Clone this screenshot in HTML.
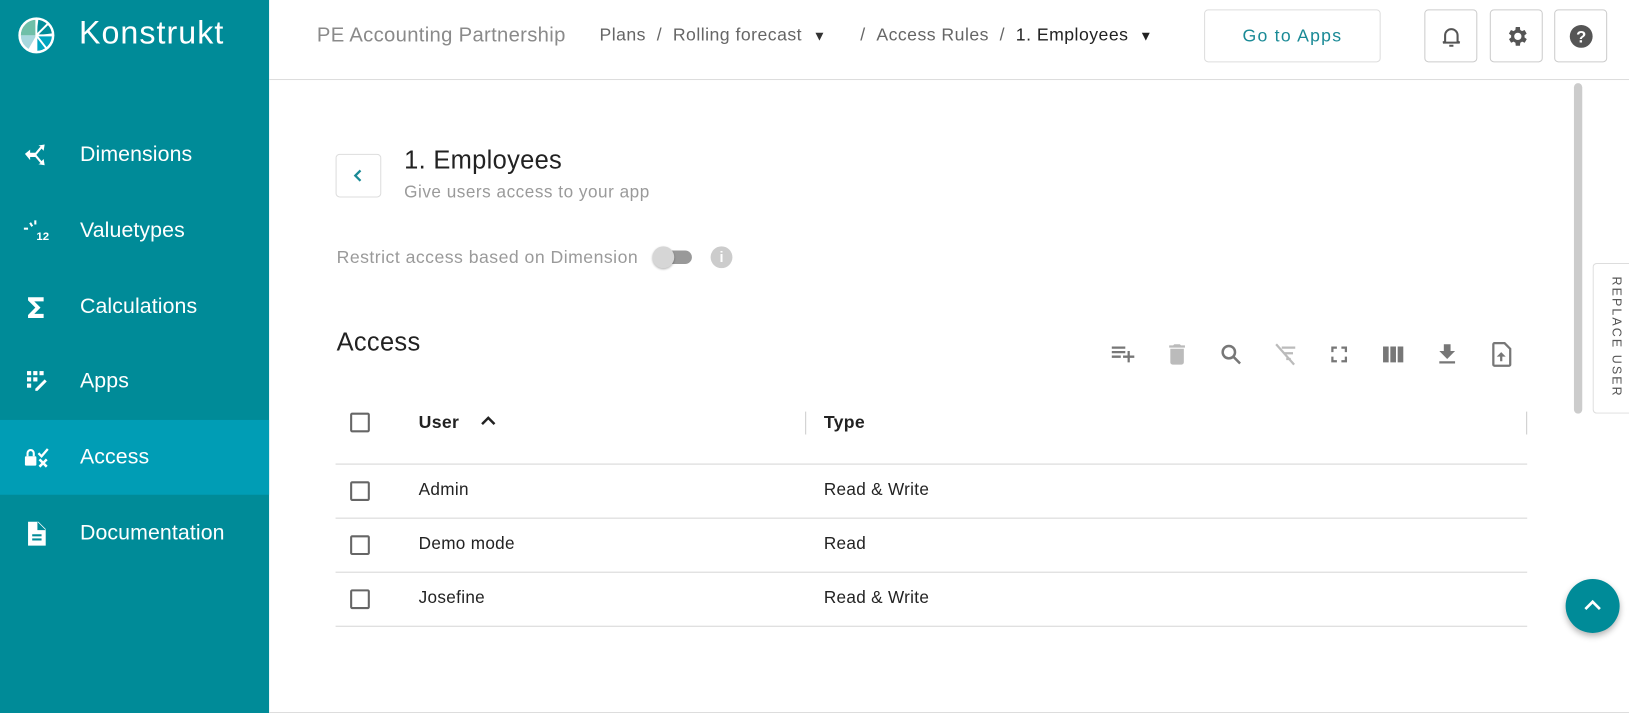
<!DOCTYPE html>
<html><head><meta charset="utf-8"><style>
*{box-sizing:border-box;margin:0;padding:0}
html,body{width:1629px;height:713px;overflow:hidden;background:#fff;font-family:"Liberation Sans",Arial,sans-serif}
#w{position:absolute;left:0;top:0;width:1568px;height:686px;transform:scale(1.0389,1.0394);transform-origin:0 0}
.a{position:absolute;white-space:nowrap}
.side{left:0;top:0;width:259px;height:686px;background:#008b98}
.nav{left:0;width:259px;height:72px;color:#fff;font-size:20.5px;line-height:72px;padding-left:77px;letter-spacing:0.1px}
.nav svg{position:absolute;left:22px;top:24px}
.bc{font-size:17px;color:#666;top:24px;letter-spacing:0.45px}
.ib{top:9px;width:51px;height:51px;border:1px solid #ccc;border-radius:4px}
.ib svg{position:absolute;left:13px;top:13px}
.tb{top:328px}
.row{left:323px;width:1147px;border-bottom:1px solid #d6d6d6}
.cb{position:absolute;left:14px;width:19px;height:19px;border:2px solid #666;border-radius:2px}
.cell{position:absolute;font-size:16.5px;color:#222;letter-spacing:0.3px}
</style></head><body><div id="w">
<div class="a side"></div>
<svg class="a" style="left:16px;top:15px" width="38" height="38" viewBox="0 0 40 40">
<circle cx="20" cy="20" r="18" fill="#fff"/>
<path d="M20 20 L20 4 A16 16 0 0 0 4 20Z" fill="#6fbfa8"/>
<path d="M20 20 L4 20 A16 16 0 0 0 12 34Z" fill="#a8d8de"/>
<path d="M20 20 L36 20 A16 16 0 0 1 20 36Z" fill="#00a5c0"/>
<path d="M20 20 L22 4 A16 16 0 0 1 36 18Z" fill="#008b98"/>
<path d="M20 4V36M20 20L32 8M20 20H36M20 20L30 33" stroke="#fff" stroke-width="2" fill="none"/>
<circle cx="20" cy="20" r="17" fill="none" stroke="#fff" stroke-width="2.5"/>
</svg>
<div class="a" style="left:76px;top:14px;color:#fff;font-size:31px;font-weight:300;letter-spacing:1px">Konstrukt</div>
<div class="a nav" style="top:113px"><svg width="26" height="26" viewBox="0 0 26 26" fill="#fff"><path d="M2 11l5-4v3h5l5-6-2-1 6-1-1 6-2-2-5 6 5 6 2-2 1 6-6-1 2-1-5-6H7v3z"/></svg>Dimensions</div>
<div class="a nav" style="top:186px"><svg width="30" height="26" viewBox="0 0 30 26" fill="#fff"><rect x="1" y="9" width="4" height="2"/><rect x="7" y="4" width="2" height="4" transform="rotate(-30 8 6)"/><rect x="11" y="2" width="2" height="4"/><text x="13" y="21" font-size="11" font-weight="bold" font-family="Liberation Sans">12</text></svg>Valuetypes</div>
<div class="a nav" style="top:259px"><svg width="26" height="26" viewBox="0 0 26 26" fill="#fff"><path d="M5 3h15v4H11l6 6-6 6h9v4H5v-3l7-7-7-7z"/></svg>Calculations</div>
<div class="a nav" style="top:331px"><svg width="26" height="26" viewBox="0 0 26 26" fill="#fff"><rect x="4" y="2" width="4" height="4"/><rect x="10" y="2" width="4" height="4"/><rect x="16" y="2" width="4" height="4"/><rect x="4" y="8" width="4" height="4"/><rect x="10" y="8" width="4" height="4"/><rect x="4" y="14" width="4" height="4"/><path d="M12 19l9-9 2 2-9 9h-2z"/></svg>Apps</div>
<div class="a" style="left:0;top:404px;width:259px;height:72px;background:#009db5"></div>
<div class="a nav" style="top:404px"><svg width="28" height="26" viewBox="0 0 28 26" fill="#fff"><rect x="2" y="11" width="11" height="9" rx="1"/><path d="M4.5 11V8a3 3 0 0 1 6 0v3" stroke="#fff" stroke-width="2" fill="none"/><path d="M15 8l3 3 6-7" stroke="#fff" stroke-width="2.2" fill="none"/><path d="M16 14l7 7M23 14l-7 7" stroke="#fff" stroke-width="2.4"/></svg>Access</div>
<div class="a nav" style="top:477px"><svg width="26" height="26" viewBox="0 0 26 26" fill="#fff"><path d="M5 1h10l7 7v16H5z"/><path d="M14 1v8h8" fill="#008b98"/><rect x="9" y="13" width="9" height="2" fill="#008b98"/><rect x="9" y="17" width="9" height="2" fill="#008b98"/></svg>Documentation</div>

<div class="a" style="left:259px;top:76px;width:1309px;height:1px;background:#ddd"></div>
<div class="a" style="left:305px;top:23px;font-size:19.5px;color:#8a8a8a;letter-spacing:0.3px">PE Accounting Partnership</div>
<div class="a bc" style="left:577px">Plans &nbsp;/ &nbsp;Rolling forecast &nbsp;<span style="font-size:13px;color:#333">▼</span></div>
<div class="a bc" style="left:828px">/ &nbsp;Access Rules &nbsp;/ &nbsp;<span style="color:#222">1. Employees</span> &nbsp;<span style="font-size:13px;color:#222">▼</span></div>
<div class="a" style="left:1159px;top:9px;width:170px;height:51px;border:1px solid #ddd;border-radius:4px;text-align:center;line-height:50px;color:#1a8a96;font-size:17px;letter-spacing:1.2px">Go to Apps</div>
<div class="a ib" style="left:1371px"><svg width="24" height="24" viewBox="0 0 24 24" fill="none" stroke="#555" stroke-width="2"><path d="M6 17V11a6 6 0 0 1 12 0v6l2 1H4z"/><path d="M10 21h4"/></svg></div>
<div class="a ib" style="left:1434px"><svg width="24" height="24" viewBox="0 0 24 24" fill="#555"><path d="M19.4 13a7.5 7.5 0 0 0 0-2l2.1-1.6-2-3.5-2.5 1a7 7 0 0 0-1.7-1L15 3h-4l-.4 2.9a7 7 0 0 0-1.7 1l-2.5-1-2 3.5L6.6 11a7.5 7.5 0 0 0 0 2l-2.1 1.6 2 3.5 2.5-1a7 7 0 0 0 1.7 1L11 21h4l.4-2.9a7 7 0 0 0 1.7-1l2.5 1 2-3.5zM13 15.5a3.5 3.5 0 1 1 0-7 3.5 3.5 0 0 1 0 7z"/></svg></div>
<div class="a ib" style="left:1496px"><svg width="24" height="24" viewBox="0 0 24 24"><circle cx="12" cy="12" r="11" fill="#555"/><text x="12" y="18" text-anchor="middle" font-size="16" font-weight="bold" fill="#fff" font-family="Liberation Sans">?</text></svg></div>

<div class="a" style="left:1515px;top:80px;width:8px;height:318px;background:#ccc;border-radius:4px"></div>
<div class="a" style="left:1533px;top:253px;width:40px;height:145px;border:1px solid #ddd;border-right:none;border-radius:4px 0 0 4px"></div>
<div class="a" style="left:1549px;top:266px;writing-mode:vertical-rl;font-size:12px;letter-spacing:2px;color:#555">REPLACE USER</div>

<div class="a" style="left:323px;top:148px;width:44px;height:42px;border:1px solid #ddd;border-radius:4px"><svg style="position:absolute;left:14px;top:12px" width="14" height="16" viewBox="0 0 14 16"><path d="M9 3L4 8l5 5" stroke="#1a8a96" stroke-width="2.2" fill="none"/></svg></div>
<div class="a" style="left:389px;top:141px;font-size:24.5px;color:#222;letter-spacing:0.3px">1. Employees</div>
<div class="a" style="left:389px;top:176px;font-size:16.5px;color:#9a9a9a;letter-spacing:0.5px">Give users access to your app</div>
<div class="a" style="left:324px;top:238px;font-size:17px;color:#9a9a9a;letter-spacing:0.45px">Restrict access based on Dimension</div>
<div class="a" style="left:634px;top:241px;width:32px;height:13px;border-radius:7px;background:#999"></div>
<div class="a" style="left:628px;top:237px;width:21px;height:21px;border-radius:50%;background:#d6d6d6;box-shadow:0 1px 2px rgba(0,0,0,.3)"></div>
<div class="a" style="left:684px;top:237px;width:21px;height:21px;border-radius:50%;background:#ccc;color:#fff;font-size:14px;font-weight:bold;text-align:center;line-height:21px">i</div>

<div class="a" style="left:324px;top:316px;font-size:24.5px;color:#222;letter-spacing:0.3px">Access</div>
<svg class="a tb" style="left:1068px" width="26" height="26" viewBox="0 0 24 24" fill="#777"><path d="M2 5h12v2H2zm0 4h12v2H2zm0 4h8v2H2zm14 0v-4h2v4h4v2h-4v4h-2v-4h-4v-2z"/></svg>
<svg class="a tb" style="left:1120px" width="26" height="26" viewBox="0 0 24 24" fill="#bbb"><path d="M6 19a2 2 0 0 0 2 2h8a2 2 0 0 0 2-2V7H6zM19 4h-3.5l-1-1h-5l-1 1H5v2h14z"/></svg>
<svg class="a tb" style="left:1172px" width="26" height="26" viewBox="0 0 24 24" fill="none" stroke="#777" stroke-width="2.2"><circle cx="10" cy="10" r="5.5"/><path d="M14 14l6 6"/></svg>
<svg class="a tb" style="left:1224px" width="26" height="26" viewBox="0 0 24 24" fill="#bbb"><path d="M9 5h12v2H9zm2 5h8v2h-8zm2 5h4v2h-4z"/><path d="M4 3l16 18" stroke="#bbb" stroke-width="2"/></svg>
<svg class="a tb" style="left:1276px" width="26" height="26" viewBox="0 0 24 24" fill="#777"><path d="M5 5h5v2H7v3H5zm9 0h5v5h-2V7h-3zm3 9h2v5h-5v-2h3zM5 14h2v3h3v2H5z"/></svg>
<svg class="a tb" style="left:1328px" width="26" height="26" viewBox="0 0 24 24" fill="#777"><path d="M3 5h5v14H3zm6.5 0h5v14h-5zM16 5h5v14h-5z"/></svg>
<svg class="a tb" style="left:1380px" width="26" height="26" viewBox="0 0 24 24" fill="#777"><path d="M19 9h-4V3H9v6H5l7 7zM5 18v2h14v-2z"/></svg>
<svg class="a tb" style="left:1432px" width="26" height="26" viewBox="0 0 24 24"><path d="M6 2h9l5 5v14a1 1 0 0 1-1 1H6a1 1 0 0 1-1-1V3a1 1 0 0 1 1-1z" fill="none" stroke="#777" stroke-width="2"/><path d="M12 10l-4 4h3v4h2v-4h3z" fill="#777"/></svg>

<div class="a row" style="top:370px;height:77px"><div class="cb" style="top:27px"></div>
<div class="cell" style="left:80px;top:27px;font-weight:bold;font-size:17px">User</div>
<svg style="position:absolute;left:139px;top:28px" width="16" height="12" viewBox="0 0 16 12"><path d="M2 10l6-6 6 6" stroke="#222" stroke-width="2.4" fill="none"/></svg>
<div style="position:absolute;left:452px;top:26px;width:1px;height:22px;background:#ccc"></div>
<div class="cell" style="left:470px;top:27px;font-weight:bold;font-size:17px">Type</div>
<div style="position:absolute;left:1146px;top:26px;width:1px;height:22px;background:#ccc"></div></div>
<div class="a row" style="top:447px;height:52px"><div class="cb" style="top:16px"></div><div class="cell" style="left:80px;top:15px">Admin</div><div class="cell" style="left:470px;top:15px">Read &amp; Write</div></div>
<div class="a row" style="top:499px;height:52px"><div class="cb" style="top:16px"></div><div class="cell" style="left:80px;top:15px">Demo mode</div><div class="cell" style="left:470px;top:15px">Read</div></div>
<div class="a row" style="top:551px;height:52px"><div class="cb" style="top:16px"></div><div class="cell" style="left:80px;top:15px">Josefine</div><div class="cell" style="left:470px;top:15px">Read &amp; Write</div></div>

<div class="a" style="left:1507px;top:557px;width:52px;height:52px;border-radius:50%;background:#008b98;box-shadow:0 3px 6px rgba(0,0,0,.3)"><svg style="position:absolute;left:16px;top:17px" width="20" height="16" viewBox="0 0 20 16"><path d="M3 12l7-7 7 7" stroke="#fff" stroke-width="2.6" fill="none"/></svg></div>
<div class="a" style="left:259px;top:685px;width:1309px;height:1px;background:#ddd"></div>
</div></body></html>
